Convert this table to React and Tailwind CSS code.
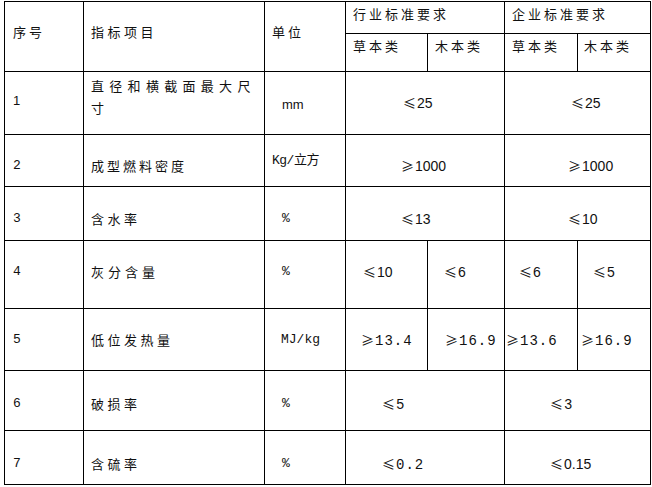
import React from 'react';

const cjk = "font-['Noto_Sans_CJK_SC','Noto_Sans',sans-serif]";
const sans = "font-['Liberation_Sans','Noto_Sans_CJK_SC',sans-serif]";
const mono = "font-['Liberation_Mono','Noto_Sans_CJK_SC',monospace]";

const td = 'border border-[#000] align-top p-0';

function Cell({ className = '', pl = 7, pt = 23, children, ...rest }) {
  return (
    <td className={`${td} ${className}`} {...rest}>
      <div className="whitespace-nowrap text-[13px] leading-[16px]" style={{ paddingLeft: pl, paddingTop: pt }}>
        {children}
      </div>
    </td>
  );
}

// comparison symbol + value, symbol drawn in the CJK face so it gets the wide slanted shape
function Val({ sym, v, m }) {
  return (
    <>
      <span className={`${cjk} text-[13px]`}>{sym}</span>
      <span className={m ? `${mono} ml-[1px] text-[14px] tracking-[1px]` : `${sans} ml-[1px] text-[14px]`}>{v}</span>
    </>
  );
}

export default function App() {
  return (
    <div className="min-h-[487px] w-[652px] bg-white pl-[4px] pt-[1px] text-[#111]">
      <table className="w-[646px] table-fixed border-collapse">
        <colgroup>
          <col className="w-[79px]" />
          <col className="w-[181px]" />
          <col className="w-[81px]" />
          <col className="w-[82px]" />
          <col className="w-[77px]" />
          <col className="w-[73px]" />
          <col className="w-[73px]" />
        </colgroup>
        <tbody>
          <tr className="h-[32px]">
            <Cell rowSpan={2} pl={8} pt={22} className={`${cjk} tracking-[3px]`}>序号</Cell>
            <Cell rowSpan={2} pl={7} pt={22} className={`${cjk} tracking-[3.5px]`}>指标项目</Cell>
            <Cell rowSpan={2} pl={7} pt={22} className={`${cjk} tracking-[3px]`}>单位</Cell>
            <Cell colSpan={2} pl={7} pt={4} className={`${cjk} tracking-[3px]`}>行业标准要求</Cell>
            <Cell colSpan={2} pl={7} pt={4} className={`${cjk} tracking-[3px]`}>企业标准要求</Cell>
          </tr>
          <tr className="h-[38px]">
            <Cell pl={7} pt={4} className={`${cjk} tracking-[3px]`}>草本类</Cell>
            <Cell pl={7} pt={4} className={`${cjk} tracking-[3px]`}>木本类</Cell>
            <Cell pl={7} pt={4} className={`${cjk} tracking-[3px]`}>草本类</Cell>
            <Cell pl={6} pt={4} className={`${cjk} tracking-[3px]`}>木本类</Cell>
          </tr>

          <tr className="h-[63px]">
            <Cell pl={8} pt={21} className={sans}>1</Cell>
            <td className={`${td} ${cjk}`}>
              <div className="pl-[7px] pt-[3px] text-[13px] leading-[22px] tracking-[5.3px]">
                <div>直径和横截面最大尺</div>
                <div>寸</div>
              </div>
            </td>
            <Cell pl={17} pt={25} className={`${sans} text-[11px]`}>mm</Cell>
            <Cell colSpan={2} pl={57} pt={23}><Val sym="≤" v="25" /></Cell>
            <Cell colSpan={2} pl={66} pt={23}><Val sym="≤" v="25" /></Cell>
          </tr>

          <tr className="h-[52px]">
            <Cell pl={8} pt={23} className={mono}>2</Cell>
            <Cell pl={7} pt={23} className={`${cjk} tracking-[3px]`}>成型燃料密度</Cell>
            <Cell pl={7} pt={18} className={`${mono} tracking-[-0.5px]`}>Kg/立方</Cell>
            <Cell colSpan={2} pl={55} pt={23}><Val sym="≥" v="1000" /></Cell>
            <Cell colSpan={2} pl={63} pt={23}><Val sym="≥" v="1000" /></Cell>
          </tr>

          <tr className="h-[54px]">
            <Cell pl={8} pt={24} className={mono}>3</Cell>
            <Cell pl={7} pt={24} className={`${cjk} tracking-[3.5px]`}>含水率</Cell>
            <Cell pl={17} pt={24} className={`${mono} text-[11px]`}>%</Cell>
            <Cell colSpan={2} pl={55} pt={24}><Val sym="≤" v="13" /></Cell>
            <Cell colSpan={2} pl={63} pt={24}><Val sym="≤" v="10" /></Cell>
          </tr>

          <tr className="h-[68px]">
            <Cell pl={8} pt={23} className={mono}>4</Cell>
            <Cell pl={7} pt={23} className={`${cjk} tracking-[4px]`}>灰分含量</Cell>
            <Cell pl={17} pt={23} className={`${mono} text-[11px]`}>%</Cell>
            <Cell pl={17} pt={23}><Val sym="≤" v="10" /></Cell>
            <Cell pl={16} pt={23}><Val sym="≤" v="6" /></Cell>
            <Cell pl={14} pt={23}><Val sym="≤" v="6" /></Cell>
            <Cell pl={15} pt={23}><Val sym="≤" v="5" /></Cell>
          </tr>

          <tr className="h-[62px]">
            <Cell pl={8} pt={23} className={mono}>5</Cell>
            <Cell pl={7} pt={23} className={`${cjk} tracking-[3.5px]`}>低位发热量</Cell>
            <Cell pl={16} pt={23} className={`${mono} text-[12px]`}>MJ/kg</Cell>
            <Cell pl={15} pt={23}><Val sym="≥" v="13.4" m /></Cell>
            <Cell pl={17} pt={23}><Val sym="≥" v="16.9" m /></Cell>
            <Cell pl={1} pt={23}><Val sym="≥" v="13.6" m /></Cell>
            <Cell pl={3} pt={23}><Val sym="≥" v="16.9" m /></Cell>
          </tr>

          <tr className="h-[60px]">
            <Cell pl={8} pt={25} className={mono}>6</Cell>
            <Cell pl={7} pt={25} className={`${cjk} tracking-[3.5px]`}>破损率</Cell>
            <Cell pl={17} pt={25} className={`${mono} text-[11px]`}>%</Cell>
            <Cell colSpan={2} pl={36} pt={25}><Val sym="≤" v="5" m /></Cell>
            <Cell colSpan={2} pl={45} pt={25}><Val sym="≤" v="3" m /></Cell>
          </tr>

          <tr className="h-[54px]">
            <Cell pl={8} pt={25} className={mono}>7</Cell>
            <Cell pl={7} pt={25} className={`${cjk} tracking-[3.5px]`}>含硫率</Cell>
            <Cell pl={17} pt={25} className={`${mono} text-[11px]`}>%</Cell>
            <Cell colSpan={2} pl={36} pt={25}><Val sym="≤" v="0.2" m /></Cell>
            <Cell colSpan={2} pl={45} pt={25}><Val sym="≤" v="0.15" /></Cell>
          </tr>
        </tbody>
      </table>
    </div>
  );
}
